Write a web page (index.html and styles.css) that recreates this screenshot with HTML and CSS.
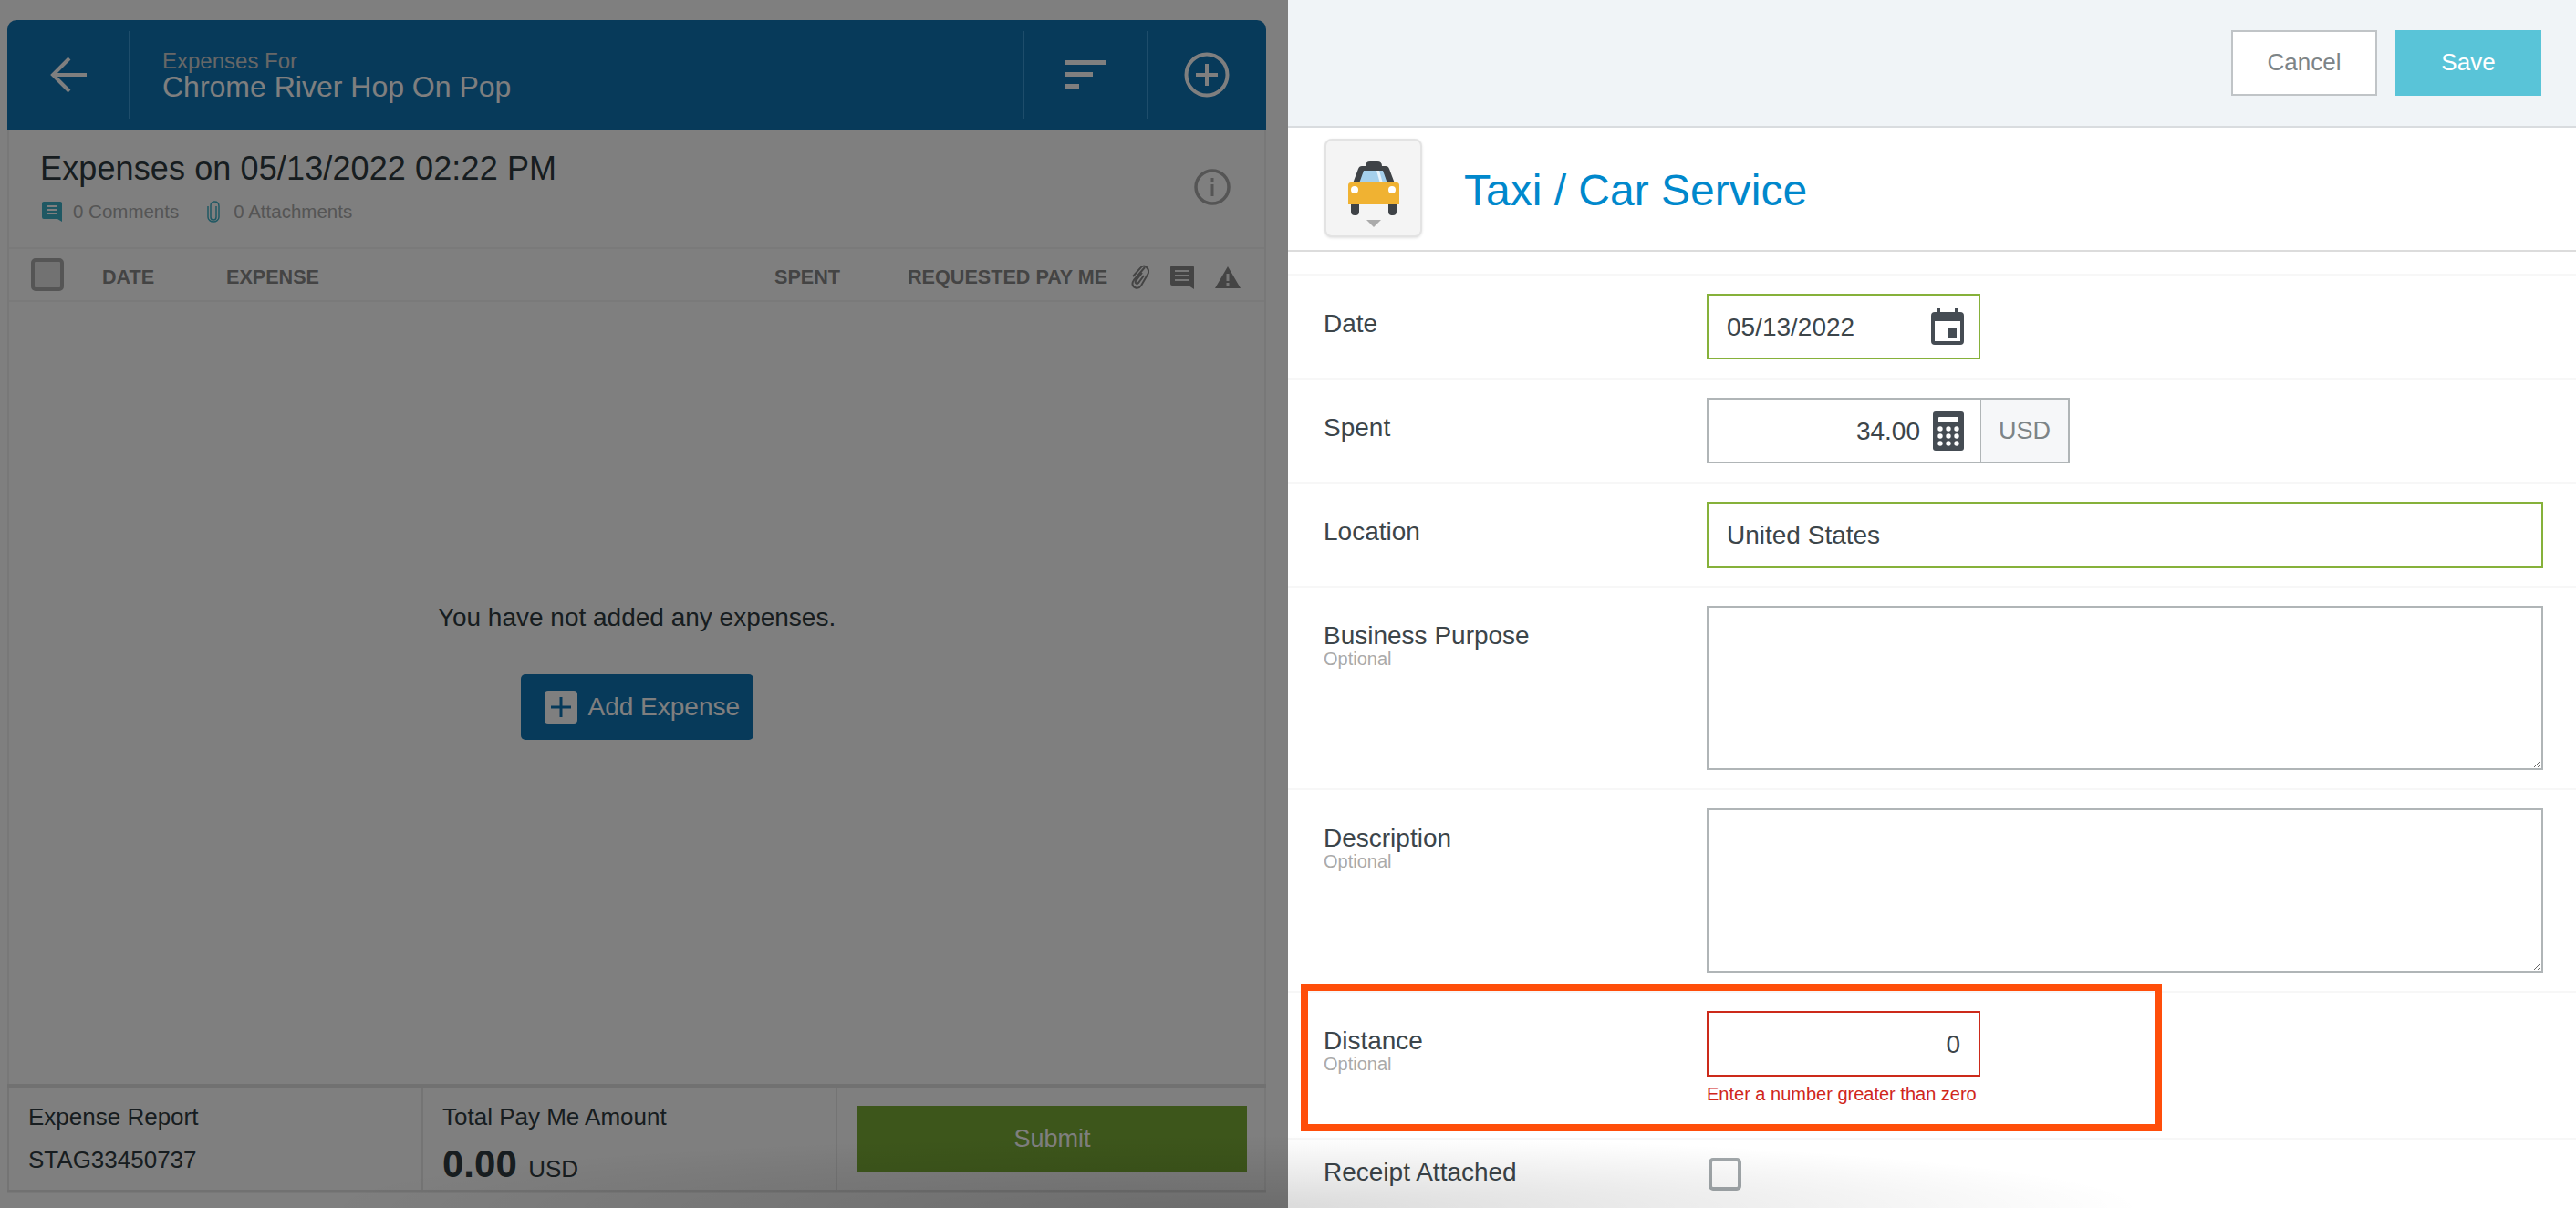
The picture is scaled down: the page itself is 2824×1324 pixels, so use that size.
FILE: index.html
```html
<!DOCTYPE html>
<html lang="en">
<head>
    <meta charset="UTF-8">
    <title>Taxi / Car Service</title>
    <link rel="stylesheet" href="styles.css">
</head>
<body>
    <div class="page">
        <div class="left">
            <div class="card">
                <div class="card-head">
                    <div class="head-cell back">
                        <svg width="40" height="40" viewBox="0 0 40 40" fill="none" stroke="#fff" stroke-width="4"><path d="M40 20H3M21 2L3 20l18 18"/></svg>
                    </div>
                    <div class="head-title">
                        <div class="head-small">Expenses For</div>
                        <div class="head-big">Chrome River Hop On Pop</div>
                    </div>
                    <div class="head-cell sort">
                        <svg width="46" height="32" viewBox="0 0 46 32" fill="#fff"><rect width="46" height="5"/><rect y="13" width="31" height="5"/><rect y="26" width="16" height="6"/></svg>
                    </div>
                    <div class="head-cell add">
                        <svg width="50" height="50" viewBox="0 0 50 50" fill="none" stroke="#fff"><circle cx="25" cy="25" r="22.5" stroke-width="4"/><path d="M25 13v24M13 25h24" stroke-width="4"/></svg>
                    </div>
                </div>

                <div class="summary">
                    <div>
                        <h1>Expenses on 05/13/2022 02:22 PM</h1>
                        <div class="meta">
                            <svg width="22" height="22" viewBox="0 0 22 22"><path d="M2 0h18a2 2 0 0 1 2 2v15l0 5-5-3H2a2 2 0 0 1-2-2V2a2 2 0 0 1 2-2z" fill="#3fb1c7"/><path d="M5 5h12M5 9h12M5 13h12" stroke="#fff" stroke-width="2"/></svg>
                            <span class="meta-text">0 Comments</span>
                            <svg class="meta-clip" width="14" height="24" viewBox="0 0 14 24" fill="none" stroke="#3fb1c7" stroke-width="1.5"><path d="M10 6v12a3 3 0 0 1-6 0V5a4 4 0 0 1 4-4c3 0 5 2 5 5v12c0 3-3 5-6 5s-6-2-6-5V6"/></svg>
                            <span class="meta-text attach">0 Attachments</span>
                        </div>
                    </div>
                    <svg class="info" width="40" height="40" viewBox="0 0 40 40" fill="none" stroke="#aaa"><circle cx="20" cy="20" r="18" stroke-width="3.5"/><path d="M20 17v13M20 10v4" stroke-width="3"/></svg>
                </div>

                <div class="table-head">
                    <span class="check dark"></span>
                    <span class="th th-date">DATE</span>
                    <span class="th th-expense">EXPENSE</span>
                    <span class="th th-spent">SPENT</span>
                    <span class="th th-pay">REQUESTED PAY ME</span>
                    <svg class="th-clip" width="22" height="28" viewBox="0 0 22 28" fill="none" stroke="#888" stroke-width="2"><path d="M17 3L5 17c-3 4-1 7 1 8s5 1 7-2L20 11c2-3 1-6-1-8s-5-2-7 1L4 13M14 9l-7 9c-1 2 1 4 3 2l6-8"/></svg>
                    <svg class="th-note" width="26" height="26" viewBox="0 0 26 26"><path d="M2 0h22a2 2 0 0 1 2 2v24l-6-4H2a2 2 0 0 1-2-2V2a2 2 0 0 1 2-2z" fill="#888"/><path d="M5 6h16M5 11h16M5 16h16" stroke="#eee" stroke-width="2"/></svg>
                    <svg class="th-warn" width="28" height="24" viewBox="0 0 28 24"><path d="M14 0l14 24H0z" fill="#888"/><path d="M14 8v8M14 18v3" stroke="#eee" stroke-width="3"/></svg>
                </div>

                <div class="empty">
                    <p>You have not added any expenses.</p>
                    <button class="add-btn">
                        <span class="plus-tile">
                            <svg width="24" height="24" viewBox="0 0 24 24" stroke="#0f74b5" stroke-width="3"><path d="M12 1v22M1 12h22"/></svg>
                        </span>
                        Add Expense
                    </button>
                </div>

                <div class="card-foot">
                    <div class="foot-cell">
                        <div class="foot-label">Expense Report</div>
                        <div class="foot-id">STAG33450737</div>
                    </div>
                    <div class="foot-cell">
                        <div class="foot-label">Total Pay Me Amount</div>
                        <div class="foot-total"><b>0.00</b> <span>USD</span></div>
                    </div>
                    <div class="foot-cell foot-action">
                        <button class="submit">Submit</button>
                    </div>
                </div>
            </div>
            <div class="dim"></div>
        </div>

        <div class="right">
            <div class="actions">
                <button class="btn-cancel">Cancel</button>
                <button class="btn-save">Save</button>
            </div>

            <div class="title-row">
                <div class="type-tile">
                    <svg width="58" height="60" viewBox="0 0 58 60">
                        <path d="M20 6q0-5 5-5h8q5 0 5 5h4q3 0 4 3l6 16H6l6-16q1-3 4-3z" fill="#3f4347"/>
                        <path d="M18 11h21l5 14H13z" fill="#a5d0ec"/>
                        <path d="M32 11h3l4 14h-3z" fill="#e8f3fa"/>
                        <rect x="4" y="42" width="9" height="18" rx="4" fill="#3f4347"/>
                        <rect x="45" y="42" width="9" height="18" rx="4" fill="#3f4347"/>
                        <path d="M4 24h50a3 3 0 0 1 3 3v21H1V27a3 3 0 0 1 3-3z" fill="#f0b232"/>
                        <circle cx="8" cy="32" r="4" fill="#fff"/>
                        <circle cx="49" cy="32" r="4" fill="#fff"/>
                    </svg>
                    <span class="tile-arrow"></span>
                </div>
                <h2>Taxi / Car Service</h2>
            </div>

            <div class="form">
                <div class="row">
                    <div class="label">Date</div>
                    <div class="field short valid date-field">
                        <span class="value">05/13/2022</span>
                        <svg width="36" height="40" viewBox="0 0 36 40"><path fill-rule="evenodd" d="M6 0h4v4h16V0h4v4h2a4 4 0 0 1 4 4v28a4 4 0 0 1-4 4H4a4 4 0 0 1-4-4V8a4 4 0 0 1 4-4h2zM4 14v22h28V14z" fill="#454c53"/><rect x="18" y="22" width="10" height="10" fill="#454c53"/></svg>
                    </div>
                </div>
                <div class="row">
                    <div class="label">Spent</div>
                    <div class="amount">
                        <div class="field short plain right-text">
                            <span class="value">34.00</span>
                            <svg width="34" height="43" viewBox="0 0 34 43"><rect width="34" height="43" rx="3" fill="#454c53"/><rect x="6" y="6" width="22" height="6" rx="1" fill="#fff"/><g fill="#fff"><circle cx="8" cy="19" r="2.7"/><circle cx="17" cy="19" r="2.7"/><circle cx="26" cy="19" r="2.7"/><circle cx="8" cy="27" r="2.7"/><circle cx="17" cy="27" r="2.7"/><circle cx="26" cy="27" r="2.7"/><circle cx="8" cy="35" r="2.7"/><circle cx="17" cy="35" r="2.7"/><circle cx="26" cy="35" r="2.7"/></g></svg>
                        </div>
                        <div class="currency">USD</div>
                    </div>
                </div>
                <div class="row">
                    <div class="label">Location</div>
                    <div class="field wide valid"><span class="value">United States</span></div>
                </div>
                <div class="row">
                    <div class="label">Business Purpose<small>Optional</small></div>
                    <textarea class="area"></textarea>
                </div>
                <div class="row">
                    <div class="label">Description<small>Optional</small></div>
                    <textarea class="area"></textarea>
                </div>
                <div class="row row-distance">
                    <div class="label">Distance<small>Optional</small></div>
                    <div>
                        <div class="field short error right-text"><span class="value">0</span></div>
                        <div class="error-text">Enter a number greater than zero</div>
                    </div>
                </div>
                <div class="row">
                    <div class="label label-tight">Receipt Attached</div>
                    <span class="check receipt-check"></span>
                </div>
                <div class="callout"></div>
            </div>
        </div>
        <div class="edge-shadow"></div>
    </div>
</body>
</html>
```

FILE: styles.css
```css
* {
    margin: 0;
    padding: 0;
    box-sizing: border-box;
}

body {
    font-family: "Liberation Sans", Arial, sans-serif;
    color: #2f3a40;
    background: #fff;
}

.page {
    position: relative;
    display: flex;
    width: 2824px;
    height: 1324px;
    overflow: hidden;
}

button {
    font-family: inherit;
    border: none;
}

/* left panel */
.left {
    position: relative;
    width: 1412px;
    height: 1324px;
    padding: 22px 24px 16px 8px;
    background: #fff;
}

.dim {
    position: absolute;
    inset: 0;
    background: rgba(0, 0, 0, 0.5);
}

.card {
    display: flex;
    flex-direction: column;
    height: 100%;
    border: 2px solid #f0f0f0;
    border-top: none;
    border-radius: 10px 10px 0 0;
}

.card-head {
    display: flex;
    align-items: center;
    height: 120px;
    margin: 0 -2px;
    padding: 12px 0 12px;
    background: #0f74b5;
    border-radius: 10px 10px 0 0;
    color: #fff;
}

.head-cell {
    display: flex;
    align-items: center;
    justify-content: center;
    height: 96px;
}

.back {
    width: 134px;
    padding-left: 0;
    border-right: 1px solid #3c9ad6;
}

.head-title {
    flex: 1;
    padding-left: 36px;
}

.head-small {
    font-size: 24px;
    color: #cfcfcf;
    line-height: 28px;
    margin-top: 2px;
}

.head-big {
    font-size: 32px;
    line-height: 36px;
    margin-top: -4px;
}

.sort {
    width: 135px;
    border-left: 1px solid #3c9ad6;
}

.add {
    width: 131px;
    border-left: 1px solid #3c9ad6;
}

.summary {
    display: flex;
    justify-content: space-between;
    height: 131px;
    padding: 22px 37px 0 34px;
    border-bottom: 2px solid #f4f4f4;
}

h1 {
    font-size: 36px;
    font-weight: 400;
    line-height: 42px;
    letter-spacing: 0.12px;
    color: #2f3a40;
}

.meta {
    display: flex;
    align-items: center;
    margin-top: 14px;
    margin-left: 2px;
}

.meta-text {
    font-size: 20.5px;
    color: #aaa;
    margin-left: 12px;
}

.meta-clip {
    margin-left: 31px;
}

.meta-text.attach {
    margin-left: 15px;
}

.info {
    margin-top: 21px;
}

.table-head {
    display: flex;
    align-items: center;
    height: 58px;
    padding-top: 6px;
    padding-left: 24px;
    border-bottom: 2px solid #f4f4f4;
}

.check {
    display: block;
    width: 36px;
    height: 36px;
    border: 4px solid #a2a8ab;
    border-radius: 5px;
    background: #fff;
}

.check.dark {
    position: relative;
    top: -3px;
    border-color: #aaa;
    background: #e4e4e4;
}

.th {
    font-size: 21.6px;
    font-weight: 700;
    color: #888;
}

.th-date {
    margin-left: 42px;
    width: 136px;
}

.th-expense {
    width: 601px;
}

.th-spent {
    width: 146px;
}

.th-pay {
    width: 230px;
}

.th-clip {
    margin-left: 13px;
}

.th-note {
    margin-left: 23px;
}

.th-warn {
    margin-left: 23px;
}

.empty {
    flex: 1;
    display: flex;
    flex-direction: column;
    align-items: center;
    padding-top: 330px;
}

.empty p {
    font-size: 28px;
    line-height: 32px;
    color: #2f3a40;
    margin-bottom: 46px;
}

.add-btn {
    display: flex;
    align-items: center;
    gap: 12px;
    width: 255px;
    height: 72px;
    padding-left: 26px;
    background: #0f74b5;
    border-radius: 5px;
    color: #fff;
    font-size: 28px;
}

.plus-tile {
    display: flex;
    align-items: center;
    justify-content: center;
    width: 36px;
    height: 36px;
    background: #fff;
    border-radius: 4px;
}

.card-foot {
    display: flex;
    height: 118px;
    border-top: 4px solid #e2e2e2;
    border-bottom: 2px solid #e2e2e2;
    margin: 0 -2px;
}

.foot-cell {
    width: 454px;
    padding: 16px 0 0 21px;
    border-left: 2px solid #e8e8e8;
}

.foot-label {
    font-size: 26px;
    line-height: 32px;
    color: #2f3a40;
}

.foot-id {
    font-size: 26px;
    line-height: 32px;
    margin-top: 15px;
}

.foot-total {
    margin-top: 11px;
    line-height: 50px;
}

.foot-total b {
    font-size: 42px;
}

.foot-total span {
    font-size: 26px;
    margin-left: 8px;
}

.foot-action {
    flex: 1;
    padding: 20px 21px 0 22px;
}

.submit {
    display: block;
    width: 100%;
    height: 72px;
    background: #7bad37;
    color: #fff;
    font-size: 27px;
}

/* right panel */
.right {
    width: 1412px;
    height: 1324px;
    background: #fff;
}

.actions {
    display: flex;
    justify-content: flex-end;
    gap: 20px;
    height: 140px;
    padding: 33px 38px 0 0;
    background: #f0f4f7;
    border-bottom: 2px solid #d9dcdf;
}

.actions button {
    width: 160px;
    height: 72px;
    padding-bottom: 2px;
    font-size: 26px;
}

.btn-cancel {
    background: #fff;
    border: 2px solid #c0c4c7;
    color: #7d8487;
}

.btn-save {
    background: #59c4d8;
    color: #fff;
}

.title-row {
    display: flex;
    align-items: center;
    height: 136px;
    padding: 0 0 0 40px;
    border-bottom: 2px solid #dcdcdc;
}

.type-tile {
    position: relative;
    display: flex;
    justify-content: center;
    width: 107px;
    height: 108px;
    margin-top: -2px;
    padding-top: 22px;
    background: #f4f4f4;
    border: 2px solid #e3e3e3;
    border-radius: 8px;
    box-shadow: 0 1px 3px rgba(0, 0, 0, 0.12);
}

.type-tile svg {
    flex: none;
}

.tile-arrow {
    position: absolute;
    left: 44px;
    bottom: 9px;
    border-left: 8px solid transparent;
    border-right: 8px solid transparent;
    border-top: 8px solid #aaa;
}

h2 {
    margin-left: 46px;
    margin-top: 3px;
    font-size: 48px;
    font-weight: 400;
    color: #0088cc;
}

.form {
    position: relative;
    padding-top: 24px;
}

.row {
    display: flex;
    padding: 20px 0 20px 39px;
    border-top: 2px solid #f7f7f7;
}

.row-distance {
    height: 161px;
}

.label {
    width: 420px;
    padding-top: 19px;
    font-size: 28px;
    line-height: 28px;
    color: #3c454a;
}

.label-tight {
    padding-top: 2px;
}

.label small {
    display: block;
    font-size: 20px;
    line-height: 22px;
    color: #aaa;
}

.field {
    display: flex;
    align-items: center;
    height: 72px;
    padding: 0 20px;
    font-size: 28px;
    color: #3c454a;
    background: #fff;
}

.date-field {
    padding-right: 16px;
}

.value {
    flex: 1;
    position: relative;
    top: 1px;
}

.short {
    width: 300px;
}

.wide {
    width: 917px;
}

.valid {
    border: 2px solid #86b13a;
}

.plain {
    border: 2px solid #b0b5b7;
    border-right: none;
}

.error {
    border: 2px solid #cc2a1a;
}

.right-text {
    text-align: right;
}

.right-text svg {
    margin-left: 14px;
    margin-right: -2px;
}

.amount {
    display: flex;
}

.currency {
    display: flex;
    align-items: center;
    justify-content: center;
    width: 98px;
    height: 72px;
    font-size: 27px;
    color: #7d8487;
    background: #f6f7f9;
    border: 2px solid #b0b5b7;
    border-left-width: 1px;
}

.area {
    display: block;
    width: 917px;
    height: 180px;
    border: 2px solid #b0b5b7;
    background: #fff;
}

.error-text {
    margin-top: 8px;
    font-size: 20px;
    color: #d0261a;
}

.receipt-check {
    margin-left: 2px;
}

.callout {
    position: absolute;
    left: 14px;
    top: 802px;
    width: 944px;
    height: 162px;
    border: 8px solid #ff4e0a;
}

.edge-shadow {
    position: absolute;
    left: 0;
    right: 0;
    bottom: 0;
    height: 90px;
    background: radial-gradient(ellipse 1000px 80px at 1350px 100%, rgba(0, 0, 0, 0.15), rgba(0, 0, 0, 0));
    pointer-events: none;
}
```
